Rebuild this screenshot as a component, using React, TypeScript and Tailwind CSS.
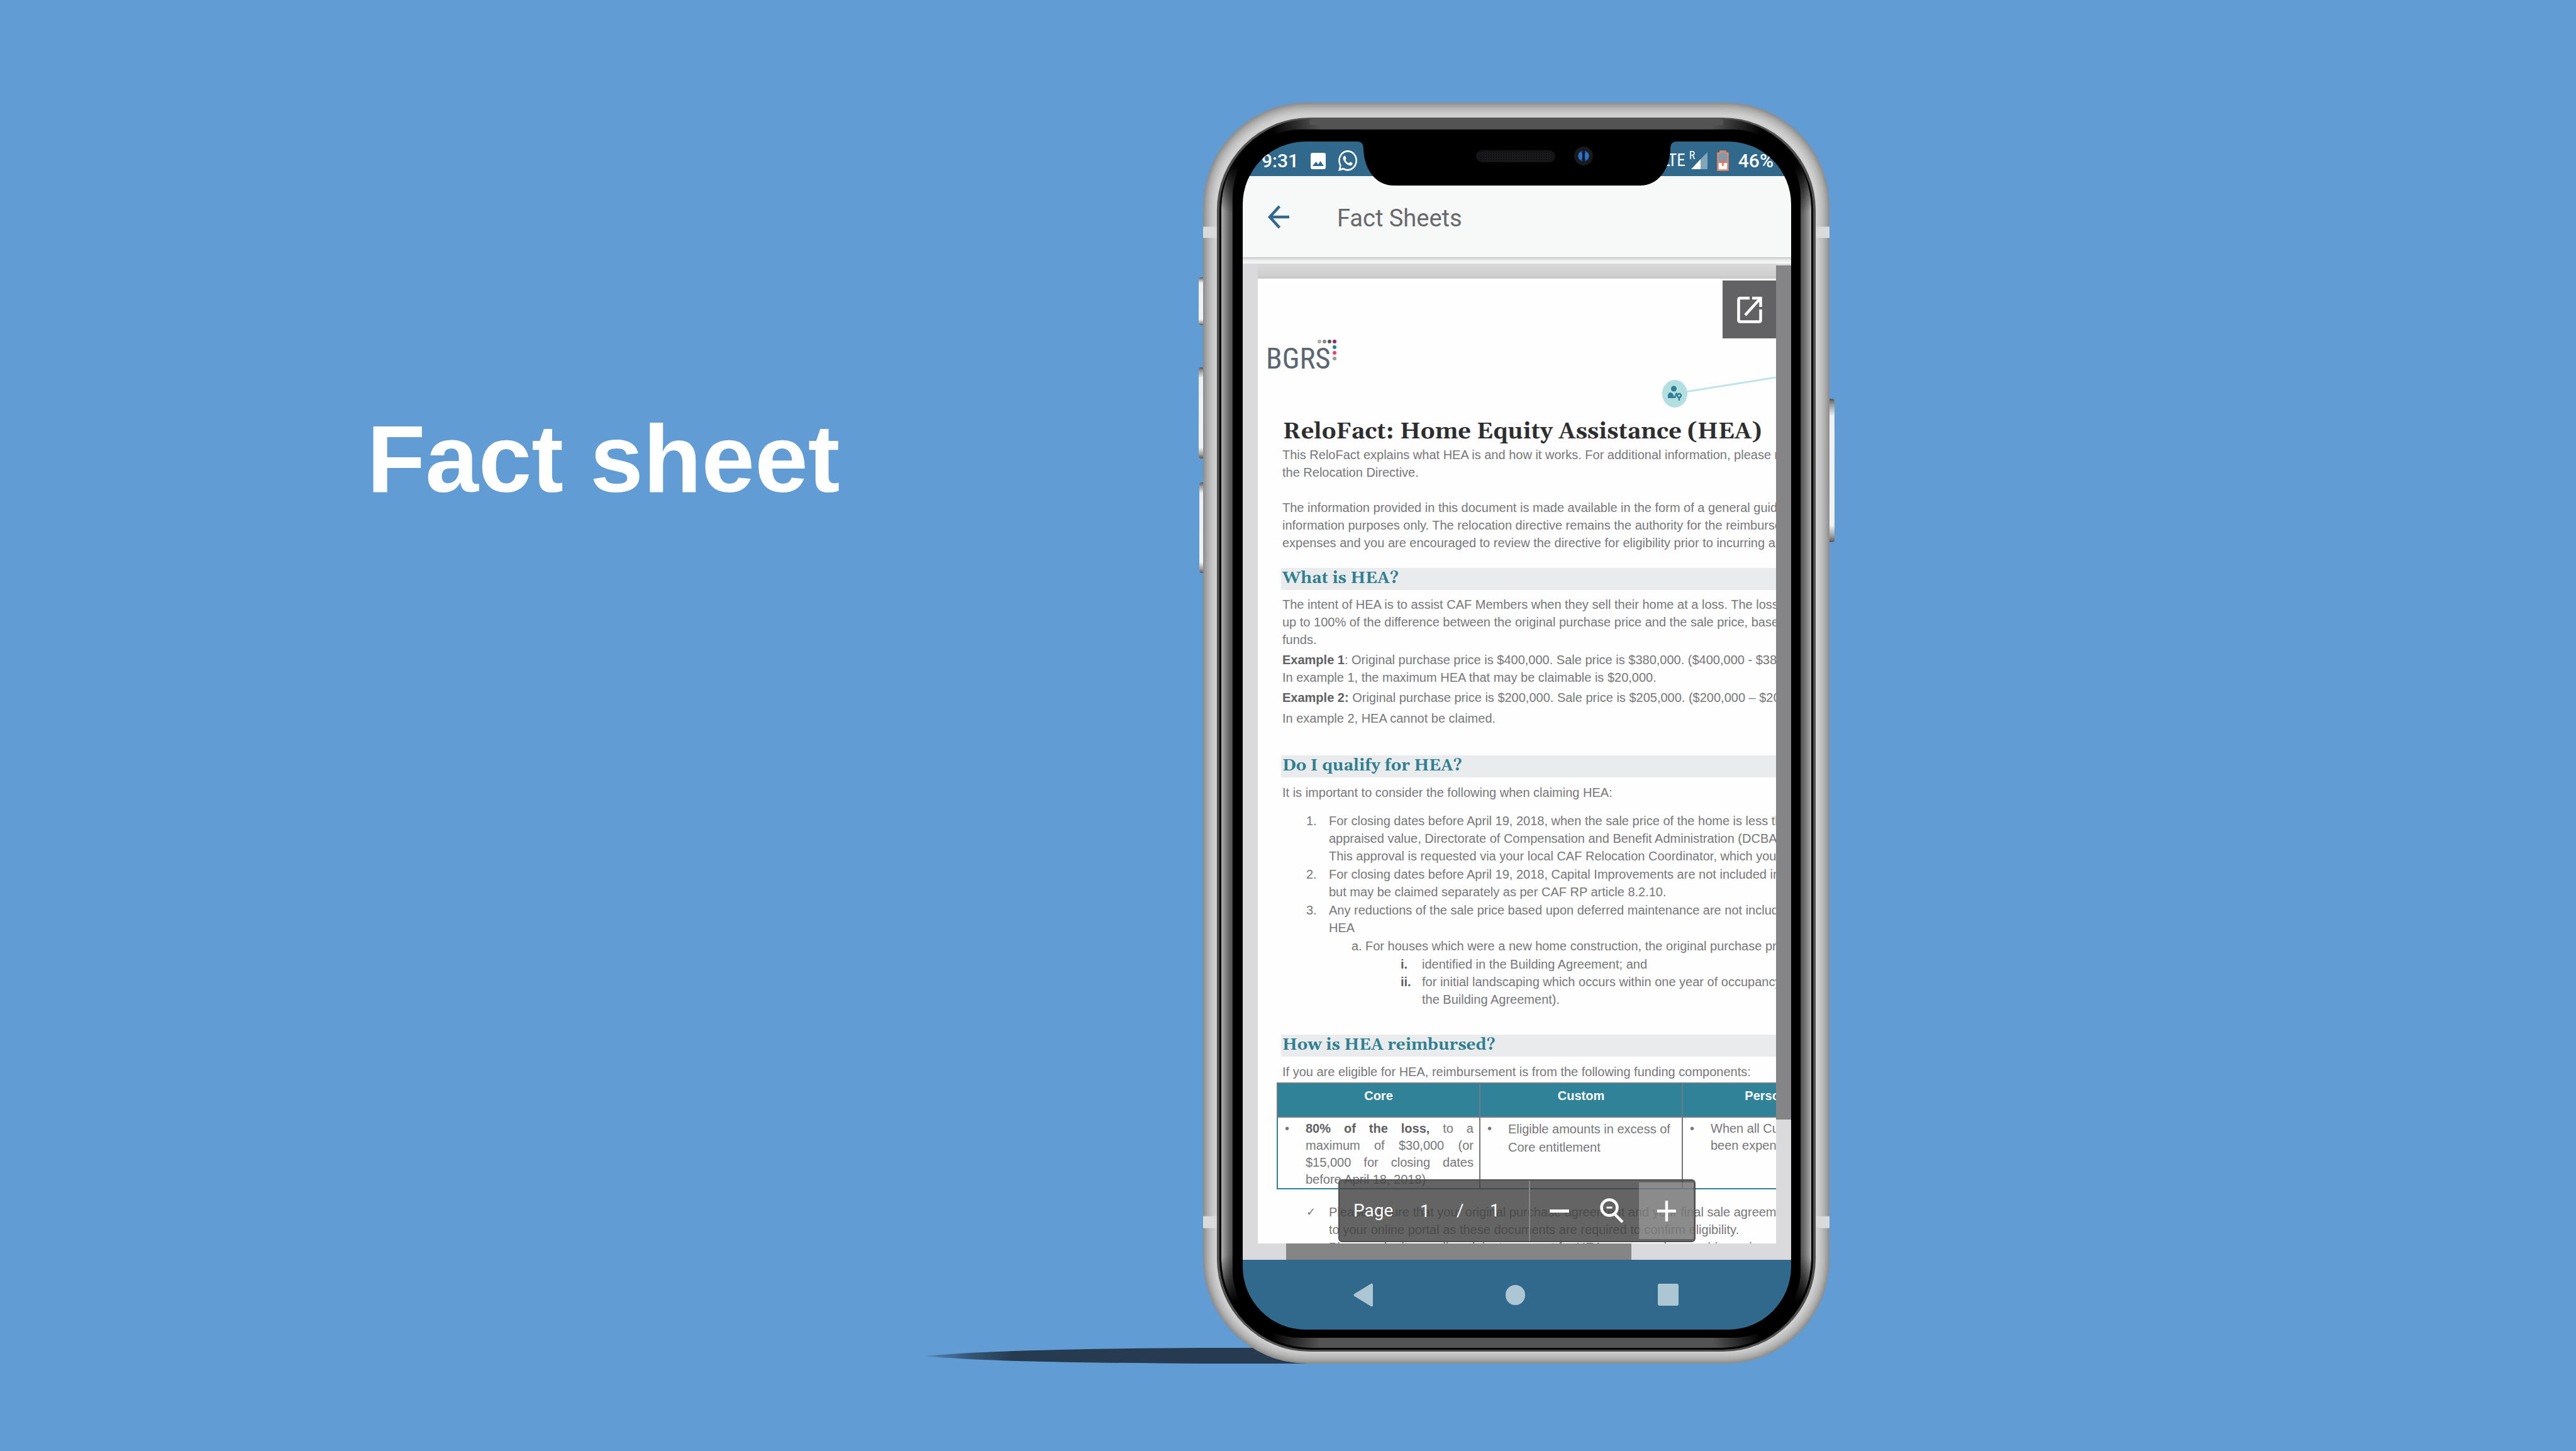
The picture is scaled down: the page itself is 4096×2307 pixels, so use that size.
import React from "react";

const RINGS = ["#8f8f8f", "#999998", "#a3a3a2", "#acacab", "#b4b4b3", "#bababa", "#c0c0c0", "#c5c5c5", "#cacaca", "#cecece", "#d0d0d0"];

const CORNERS = [
  { x: 71, y: 62 },
  { x: 928, y: 62 },
  { x: 71, y: 1951 },
  { x: 928, y: 1951 },
];

function PhoneBody() {
  return (
    <svg className="absolute inset-0 h-full w-full" viewBox="0 0 999 2011" preserveAspectRatio="none" aria-hidden="true">
      <defs>
        <linearGradient id="bezel" x1="29" x2="970" y1="0" y2="0" gradientUnits="userSpaceOnUse">
          <stop offset="0" stopColor="#b0b0b0" />
          <stop offset="0.003" stopColor="#9c9c9c" />
          <stop offset="0.014" stopColor="#626262" />
          <stop offset="0.019" stopColor="#535353" />
          <stop offset="0.981" stopColor="#535353" />
          <stop offset="0.986" stopColor="#626262" />
          <stop offset="0.997" stopColor="#9c9c9c" />
          <stop offset="1" stopColor="#b0b0b0" />
        </linearGradient>
        <radialGradient id="fade">
          <stop offset="0" stopColor="#000" />
          <stop offset="0.35" stopColor="#000" />
          <stop offset="1" stopColor="#000" stopOpacity="0" />
        </radialGradient>
        <clipPath id="bezelClip">
          <rect x="29" y="26" width="941" height="1962" rx="143" />
        </clipPath>
      </defs>
      {RINGS.map((fill, i) => (
        <rect key={fill} x={i * 2} y={i * 2} width={999 - i * 4} height={2011 - i * 4} rx={166 - i * 2} fill={fill} />
      ))}
      <rect x="0" y="198" width="24" height="18" fill="#dadada" />
      <rect x="975" y="198" width="24" height="18" fill="#dadada" />
      <rect x="0" y="1776" width="24" height="19" fill="#dadada" />
      <rect x="975" y="1776" width="24" height="19" fill="#dadada" />
      <rect x="22" y="24" width="955" height="1968" rx="148" fill="#505050" />
      <rect x="26" y="27" width="947" height="1962" rx="145" fill="#000" />
      <g clipPath="url(#bezelClip)">
        <rect x="29" y="26" width="941" height="1960" rx="143" fill="url(#bezel)" />
        {CORNERS.map((c) => (
          <circle key={`${c.x}-${c.y}`} cx={c.x} cy={c.y} r="118" fill="url(#fade)" />
        ))}
      </g>
      <rect x="170" y="24" width="659" height="12" fill="#535353" />
      <rect x="47" y="43" width="906" height="1927" rx="108" fill="#000" />
    </svg>
  );
}

function SideButton({ className }: { className: string }) {
  return (
    <div
      className={`absolute bg-[linear-gradient(to_bottom,#555_0,#999_4%,#eef0f3_12%,#f2f3f5_88%,#999_96%,#555_100%)] ${className}`}
    />
  );
}

function Notch() {
  return (
    <svg className="absolute top-0 left-1/2 h-[70px] w-[508px] -translate-x-1/2" viewBox="0 0 508 70" aria-hidden="true">
      <defs>
        <pattern id="mesh" width="4" height="4" patternUnits="userSpaceOnUse">
          <rect width="4" height="4" fill="#1b1b1d" />
          <rect width="2" height="2" fill="#0b0b0c" />
        </pattern>
      </defs>
      <path d="M0 0C7 0 10 4 10 12C11 45 30 70 58 70H450C478 70 497 45 498 12C498 4 501 0 508 0Z" fill="#000" />
      <rect x="189" y="14" width="126" height="19" rx="9.5" fill="#151516" />
      <rect x="196" y="16" width="112" height="15" fill="url(#mesh)" />
      <circle cx="360" cy="23" r="15" fill="#18191b" />
      <circle cx="360" cy="23" r="9" fill="#1d4e8f" />
      <ellipse cx="355" cy="23" rx="3" ry="6" fill="#3272c0" />
      <ellipse cx="365" cy="23" rx="3" ry="6" fill="#3272c0" />
      <rect x="358" y="14" width="4" height="18" fill="#0c1c38" />
    </svg>
  );
}

function StatusBar() {
  return (
    <div className="flex h-[55px] items-center justify-between bg-[#30698c] pt-[6px] pr-[28px] pl-[30px] font-[Roboto,sans-serif] text-[30px] font-medium leading-none text-white">
      <div className="flex items-center">
        <span className="w-[78px] shrink-0">9:31</span>
        <svg className="h-[26px] w-[24px]" viewBox="0 0 24 26" preserveAspectRatio="none" aria-hidden="true">
          <rect width="24" height="26" rx="3" fill="#fff" />
          <path d="M3 21L8.500 14L12 18.500L15.500 13L21 21Z" fill="#30698c" />
        </svg>
        <svg className="ml-[20px] h-[33px] w-[30px]" viewBox="0 0 24 24" preserveAspectRatio="none" fill="#fff" aria-hidden="true">
          <path d="M17.472 14.382c-.297-.149-1.758-.867-2.030-.967-.273-.099-.471-.148-.670.150-.197.297-.767.966-.940 1.164-.173.199-.347.223-.644.075-.297-.150-1.255-.463-2.390-1.475-.883-.788-1.480-1.761-1.653-2.059-.173-.297-.018-.458.130-.606.134-.133.298-.347.446-.520.149-.174.198-.298.298-.497.099-.198.050-.371-.025-.520-.075-.149-.669-1.612-.916-2.207-.242-.579-.487-.500-.669-.510-.173-.008-.371-.010-.570-.010-.198 0-.520.074-.792.372-.272.297-1.040 1.016-1.040 2.479 0 1.462 1.065 2.875 1.213 3.074.149.198 2.096 3.200 5.077 4.487.709.306 1.262.489 1.694.625.712.227 1.360.195 1.871.118.571-.085 1.758-.719 2.006-1.413.248-.694.248-1.289.173-1.413-.074-.124-.272-.198-.570-.347m-5.421 7.403h-.004a9.870 9.870 0 01-5.031-1.378l-.361-.214-3.741.982.998-3.648-.235-.374a9.860 9.860 0 01-1.510-5.260c.001-5.450 4.436-9.884 9.888-9.884 2.640 0 5.122 1.030 6.988 2.898a9.825 9.825 0 012.893 6.994c-.003 5.450-4.437 9.884-9.885 9.884m8.413-18.297A11.815 11.815 0 0012.050 0C5.495 0 .160 5.335.157 11.892c0 2.096.547 4.142 1.588 5.945L.057 24l6.305-1.654a11.882 11.882 0 005.683 1.448h.005c6.554 0 11.890-5.335 11.893-11.893a11.821 11.821 0 00-3.480-8.413z" />
        </svg>
      </div>
      <div className="flex items-center">
        <span className="font-['Roboto_Condensed',sans-serif] text-[27px] font-normal">LTE</span>
        <span className="relative ml-[9px] block h-[27px] w-[26px]">
          <span className="absolute -top-[4px] -left-[3px] font-['Roboto_Condensed',sans-serif] text-[18px] leading-none font-normal">R</span>
          <svg className="h-full w-full" viewBox="0 0 26 27" aria-hidden="true">
            <path d="M15 11L26 0V27H15Z" fill="#83a5ba" />
            <path d="M0 27L15 11V27Z" fill="#fff" />
          </svg>
        </span>
        <svg className="ml-[15px] h-[33px] w-[19px]" viewBox="0 0 19 33" aria-hidden="true">
          <path d="M5.500 4.500V1.500H13.500V4.500H17.500V31.500H1.500V4.500Z" fill="#7b9db1" />
          <rect x="1" y="20" width="17" height="12" fill="#fff" />
          <path d="M5.500 4.500V1.500H13.500V4.500H17.500V31.500H1.500V4.500Z" fill="none" stroke="#ee8463" strokeWidth="2.500" />
          <path d="M9.500 13V25M5 19H14" stroke="#ee6f4c" strokeWidth="2.500" />
        </svg>
        <span className="ml-[15px]">46%</span>
      </div>
    </div>
  );
}

function AppBar() {
  return (
    <header className="flex h-[129px] items-center bg-[#f7f9f8] pl-[40px]">
      <button type="button" aria-label="Back" className="h-[38px] w-[34px]">
        <svg className="h-full w-full" viewBox="0 0 34 38" fill="none" stroke="#30688f" strokeWidth="4.500" aria-hidden="true">
          <path d="M34 19H3M18.500 2L3 19L18.500 36" />
        </svg>
      </button>
      <h2 className="ml-[76px] pt-[4px] font-[Roboto,sans-serif] text-[38px] leading-none text-[#68696b]">Fact Sheets</h2>
    </header>
  );
}

function Band({ children, className }: { children: React.ReactNode; className: string }) {
  return (
    <h3 className={`h-[35px] bg-[#e9ebec] pl-[2px] font-[Gelasio,serif] text-[26px] leading-[34px] font-bold text-[#2f7f92] ${className}`}>
      {children}
    </h3>
  );
}

function Bullet({ children, className }: { children: React.ReactNode; className: string }) {
  return (
    <div className="flex">
      <span className="w-[35px] shrink-0 pl-[2px] leading-[27px]">•</span>
      <p className={`flex-1 ${className}`}>{children}</p>
    </div>
  );
}

function Line({ children }: { children: React.ReactNode }) {
  return <span className="block whitespace-nowrap">{children}</span>;
}

function DocumentPage() {
  return (
    <article className="relative min-w-0 flex-1 overflow-hidden bg-[#fefefe] pl-[35px] font-['Liberation_Sans',Arial,sans-serif] text-[20px] leading-[28px] whitespace-nowrap text-[#77777a]">
      <div className="-ml-[22px] flex h-[186px] items-end justify-between">
        <div className="relative pb-[36px]">
          <span className="block font-['Roboto_Condensed',sans-serif] text-[47px] leading-[46px] text-[#5a6670]">BGRS</span>
          <svg className="absolute top-[-8px] left-[81px] h-[36px] w-[33px]" viewBox="0 0 33 36" aria-hidden="true">
            <circle cx="4" cy="4" r="3" fill="#adadae" />
            <circle cx="12" cy="4" r="3" fill="#88898b" />
            <circle cx="20" cy="4" r="3" fill="#56585c" />
            <circle cx="28" cy="4" r="3" fill="#862a7c" />
            <circle cx="28" cy="13" r="3" fill="#27809a" />
            <circle cx="28" cy="22" r="3" fill="#ee4560" />
            <circle cx="28" cy="31" r="3" fill="#98999b" />
          </svg>
        </div>
        <svg className="-mb-[20px] h-[50px] w-[182px]" viewBox="0 0 182 50" aria-hidden="true">
          <path d="M38 24L182 1" stroke="#bfe5e6" strokeWidth="3" />
          <ellipse cx="21" cy="27" rx="20" ry="22" fill="#b3dfe1" />
          <circle cx="19.500" cy="19" r="4.500" fill="#2f7f92" />
          <path d="M10 34V30Q10 25 15 25L18 27L20 32L23 25L25 26L22 34Z" fill="#2f7f92" />
          <circle cx="28" cy="30" r="3" fill="none" stroke="#2f7f92" strokeWidth="2.500" />
          <path d="M28 33V38" stroke="#2f7f92" strokeWidth="2.500" />
        </svg>
      </div>

      <h1 className="mt-[38px] mb-[2px] pl-[5px] font-[Gelasio,serif] text-[36px] leading-[40px] font-bold text-[#2e2e30]">
        ReloFact: Home Equity Assistance (HEA)
      </h1>
      <div className="pl-[4px]">
        <p>
          <Line>This ReloFact explains what HEA is and how it works. For additional information, please refer to</Line>
          <Line>the Relocation Directive.</Line>
        </p>
        <p className="mt-[28px]">
          <Line>The information provided in this document is made available in the form of a general guide for</Line>
          <Line>information purposes only. The relocation directive remains the authority for the reimbursement of</Line>
          <Line>expenses and you are encouraged to review the directive for eligibility prior to incurring any</Line>
        </p>
      </div>

      <Band className="mt-[26px] ml-[2px]">What is HEA?</Band>
      <div className="pl-[4px]">
        <p className="mt-[9px]">
          <Line>The intent of HEA is to assist CAF Members when they sell their home at a loss. The loss is</Line>
          <Line>up to 100% of the difference between the original purchase price and the sale price, based on</Line>
          <Line>funds.</Line>
        </p>
        <p className="mt-[4px]">
          <Line><b className="text-[#606063]">Example 1</b>: Original purchase price is $400,000. Sale price is $380,000. ($400,000 - $380,000)</Line>
          <Line>In example 1, the maximum HEA that may be claimable is $20,000.</Line>
        </p>
        <p className="mt-[4px]">
          <b className="text-[#606063]">Example 2:</b> Original purchase price is $200,000. Sale price is $205,000. ($200,000 – $205,000)
        </p>
        <p className="mt-[5px]">In example 2, HEA cannot be claimed.</p>
      </div>

      <Band className="mt-[45px] ml-[2px]">Do I qualify for HEA?</Band>
      <p className="mt-[10px] pl-[4px]">It is important to consider the following when claiming HEA:</p>
      <ol className="mt-[17px] flex flex-col gap-px pl-[42px]">
        <li className="flex">
          <span className="w-[36px] shrink-0">1.</span>
          <p>
            <Line>For closing dates before April 19, 2018, when the sale price of the home is less than</Line>
            <Line>appraised value, Directorate of Compensation and Benefit Administration (DCBA)</Line>
            <Line>This approval is requested via your local CAF Relocation Coordinator, which you</Line>
          </p>
        </li>
        <li className="flex">
          <span className="w-[36px] shrink-0">2.</span>
          <p>
            <Line>For closing dates before April 19, 2018, Capital Improvements are not included in</Line>
            <Line>but may be claimed separately as per CAF RP article 8.2.10.</Line>
          </p>
        </li>
        <li className="flex">
          <span className="w-[36px] shrink-0">3.</span>
          <p>
            <Line>Any reductions of the sale price based upon deferred maintenance are not included</Line>
            <Line>HEA</Line>
          </p>
        </li>
        <li className="flex pl-[72px]">
          <span className="w-[22px] shrink-0">a.</span>
          <p>For houses which were a new home construction, the original purchase price</p>
        </li>
        <li className="pl-[150px]">
          <ol>
            <li className="flex">
              <b className="w-[34px] shrink-0 text-[#606063]">i.</b>
              <p>identified in the Building Agreement; and</p>
            </li>
            <li className="flex">
              <b className="w-[34px] shrink-0 text-[#606063]">ii.</b>
              <p>
                <Line>for initial landscaping which occurs within one year of occupancy</Line>
                <Line>the Building Agreement).</Line>
              </p>
            </li>
          </ol>
        </li>
      </ol>

      <Band className="mt-[42px] ml-[2px]">How is HEA reimbursed?</Band>
      <p className="mt-[10px] pl-[4px]">If you are eligible for HEA, reimbursement is from the following funding components:</p>

      <table className="mt-[3px] -ml-[5px] w-[968px] table-fixed border-collapse border-2 border-[#2f8297]">
        <thead>
          <tr className="h-[54px] bg-[#308298] align-top text-white">
            <th className="border-2 border-[#6f7c82] pt-[5px]">Core</th>
            <th className="border-2 border-[#6f7c82] pt-[5px]">Custom</th>
            <th className="border-2 border-[#6f7c82] pt-[5px]">Personalized</th>
          </tr>
        </thead>
        <tbody>
          <tr className="align-top">
            <td className="border-2 border-y-[#2f8297] border-l-[#2f8297] border-r-[#77777a] px-[9px] pt-[4px]">
              <Bullet className="text-justify leading-[27px] whitespace-normal">
                <b className="text-[#606063]">80% of the loss,</b> to a maximum of $30,000 (or $15,000 for closing dates before April 18, 2018)
              </Bullet>
            </td>
            <td className="border-2 border-x-[#77777a] border-y-[#2f8297] px-[9px] pt-[4px]">
              <Bullet className="leading-[29px]">
                <Line>Eligible amounts in excess of</Line>
                <Line>Core entitlement</Line>
              </Bullet>
            </td>
            <td className="border-2 border-x-[#77777a] border-y-[#2f8297] px-[9px] pt-[4px]">
              <Bullet className="leading-[27px]">
                <Line>When all Custom funds have</Line>
                <Line>been expended</Line>
              </Bullet>
            </td>
          </tr>
        </tbody>
      </table>

      <ul className="mt-[22px] pl-[42px]">
        <li className="flex">
          <span className="w-[36px] shrink-0 font-['DejaVu_Sans',sans-serif] text-[18px]">✓</span>
          <p>
            <Line>Please ensure that your original purchase agreement and your final sale agreement</Line>
            <Line>to your online portal as these documents are required to confirm eligibility.</Line>
          </p>
        </li>
        <li className="flex">
          <span className="w-[36px] shrink-0 font-['DejaVu_Sans',sans-serif] text-[18px]">✓</span>
          <p>Please submit an online claim to request for HEA, once you have sold your home</p>
        </li>
      </ul>

      <button type="button" aria-label="Open in new window" className="absolute top-[3px] right-0 flex h-[92px] w-[85px] items-center justify-center bg-[#626264]">
        <svg className="h-[43px] w-[40px]" viewBox="0 0 40 43" fill="none" stroke="#fff" strokeWidth="4.500" aria-hidden="true">
          <path d="M20 3H5Q2.500 3 2.500 5.500V38Q2.500 40.500 5 40.500H35Q37.500 40.500 37.500 38V21" />
          <path d="M24 3H37.500V17M36.500 4L13 30" />
        </svg>
      </button>

      <div className="absolute bottom-[2px] left-[128px] flex h-[100px] w-[568px] rounded-[6px] border-2 border-[#4f4f50] bg-[#424242]/82 font-[Roboto,sans-serif] text-[28px] leading-none text-white">
        <div className="flex flex-1 items-center border-r-2 border-[#858587] pl-[22px]">
          <label htmlFor="page-number" className="w-[106px]">Page</label>
          <input id="page-number" defaultValue="1" className="w-[58px] bg-transparent outline-none" />
          <span className="w-[53px]">/</span>
          <span>1</span>
        </div>
        <div className="flex w-[261px] items-center p-[3px] pr-px pl-[31px]">
          <button type="button" aria-label="Zoom out" className="flex h-full w-[34px] items-center">
            <span className="block h-[5px] w-[31px] bg-white" />
          </button>
          <button type="button" aria-label="Fit to page" className="ml-[46px] h-[40px] w-[38px]">
            <svg className="h-full w-full" viewBox="0 0 38 40" fill="none" stroke="#fff" strokeWidth="4.500" aria-hidden="true">
              <ellipse cx="15" cy="15" rx="12.500" ry="12.500" />
              <path d="M23 25L36 38" />
              <path d="M10.500 15H19.500" strokeWidth="3" />
            </svg>
          </button>
          <button type="button" aria-label="Zoom in" className="ml-auto flex h-full w-[87px] items-center justify-center bg-white/25">
            <svg className="h-[33px] w-[30px]" viewBox="0 0 30 33" stroke="#fff" strokeWidth="4.500" aria-hidden="true">
              <path d="M15 0V33M0 16.500H30" />
            </svg>
          </button>
        </div>
      </div>
    </article>
  );
}

function Viewer() {
  return (
    <div className="flex h-[1584px] bg-[#dadadc]">
      <div className="w-[24px]" />
      <div className="flex min-w-0 flex-1 flex-col">
        <div className="h-[24px] bg-[linear-gradient(to_bottom,#d9d9d9,#cfcfcf_80%,#c4c4c4)]" />
        <div className="flex h-[1534px]">
          <DocumentPage />
        </div>
        <div className="ml-[45px] h-[26px] w-[549px] bg-[#858585]" />
      </div>
      <div className="w-[24px] pt-[3px]">
        <div className="h-[1358px] bg-[#858587]" />
      </div>
    </div>
  );
}

function NavBar() {
  return (
    <nav className="flex h-[111px] items-center justify-between bg-[#30698c] pr-[179px] pl-[176px]">
      <button type="button" aria-label="Back" className="h-[38px] w-[31px]">
        <svg className="h-full w-full" viewBox="0 0 31 38" aria-hidden="true">
          <path d="M1 17.500L28 1Q31 0 31 3V35Q31 38 28 37L1 20.500Q0 19 1 17.500Z" fill="#adc6d3" />
        </svg>
      </button>
      <button type="button" aria-label="Home" className="h-[32px] w-[31px] rounded-full bg-[#adc6d3]" />
      <button type="button" aria-label="Recent apps" className="h-[35px] w-[33px] rounded-[3px] bg-[#adc6d3]" />
    </nav>
  );
}

function GroundShadow() {
  return (
    <svg className="absolute bottom-0 -left-[444px] h-[25px] w-[700px]" viewBox="0 0 700 25" preserveAspectRatio="none" aria-hidden="true">
      <defs>
        <linearGradient id="ground">
          <stop offset="0" stopColor="#263b50" stopOpacity="0.200" />
          <stop offset="0.100" stopColor="#263b50" stopOpacity="0.700" />
          <stop offset="0.200" stopColor="#263b50" />
        </linearGradient>
      </defs>
      <path d="M0 13C100 4 280 1 440 0H700V25H440C280 24 100 22 0 13Z" fill="url(#ground)" />
    </svg>
  );
}

export default function App() {
  return (
    <main className="grid min-h-screen grid-cols-[1913fr_996px_1187fr] items-start bg-[#619cd5] pt-[163px]">
      <h1 className="pt-[480px] pl-[30.5%] font-['Liberation_Sans',Arial,sans-serif] text-[152px] leading-[172px] font-bold whitespace-nowrap text-white">
        Fact sheet
      </h1>
      <section aria-label="Phone" className="relative pt-[62px] pr-[61px] pb-[54px] pl-[63px]">
        <GroundShadow />
        <SideButton className="top-[278px] -left-[7px] h-[76px] w-[8px] rounded-l-[4px]" />
        <SideButton className="top-[421px] -left-[7px] h-[145px] w-[8px] rounded-l-[4px]" />
        <SideButton className="top-[604px] -left-[6px] h-[144px] w-[7px] rounded-l-[4px]" />
        <SideButton className="top-[471px] -right-[8px] h-[228px] w-[9px] rounded-r-[4px]" />
        <PhoneBody />
        <div className="relative overflow-hidden rounded-[100px]">
          <StatusBar />
          <AppBar />
          <div className="h-[10px] bg-[linear-gradient(to_bottom,#c2c4c3,#e8eae9_40%,#fafafa)]" />
          <Viewer />
          <NavBar />
          <Notch />
        </div>
      </section>
    </main>
  );
}
